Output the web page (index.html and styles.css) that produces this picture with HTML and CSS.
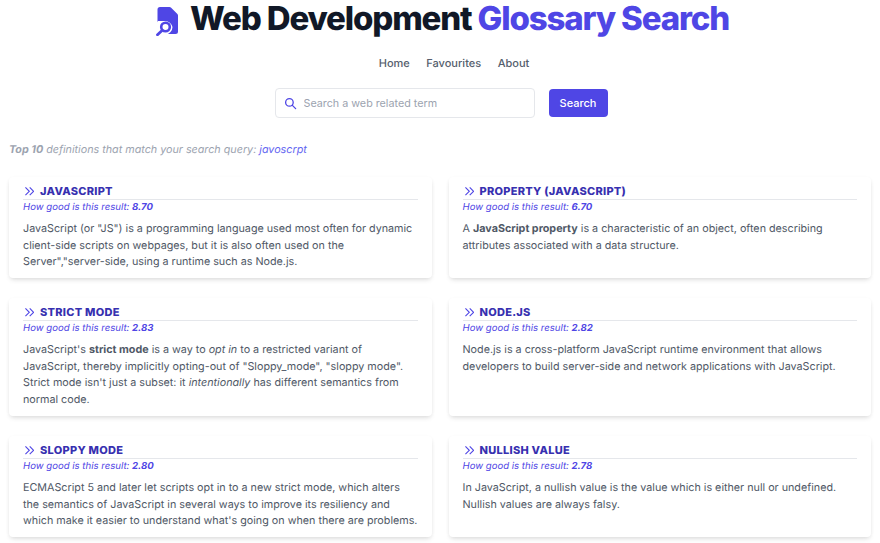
FILE: index.html
```html
<!DOCTYPE html>
<html lang="en">
<head>
<meta charset="utf-8">
<title>Web Development Glossary Search</title>
<link rel="stylesheet" href="styles.css">
</head>
<body>
<header class="masthead">
  <h1 class="title">
    <svg class="logo" viewBox="0 0 24 30" width="24" height="30" aria-hidden="true">
      <path fill="#4f46e5" d="M5 1h9.500a2 2 0 0 1 1.400.6l6.500 6.500a2 2 0 0 1 .6 1.400V25.500a2.500 2.500 0 0 1-2.500 2.500H5a2.500 2.500 0 0 1-2.500-2.500V3.500A2.500 2.500 0 0 1 5 1z"/>
      <path fill="#fff" d="M0 30V19L3 15h7a7.500 7.500 0 0 1 7.500 6A7.500 7.500 0 0 1 10 28.500V30z"/>
      <circle cx="10.500" cy="21" r="4.300" fill="none" stroke="#4f46e5" stroke-width="2.600"/>
      <path d="M7.300 24.200 2.500 28.800" stroke="#4f46e5" stroke-width="2.800" stroke-linecap="round"/>
    </svg>
    <span>Web Development <em class="accent">Glossary Search</em></span>
  </h1>
  <nav class="nav">
    <a>Home</a><a>Favourites</a><a>About</a>
  </nav>
  <form class="search">
    <label class="field">
      <svg class="field-icon" viewBox="0 0 24 24" width="16" height="16" fill="none" stroke="#4f46e5" stroke-width="2.400" stroke-linecap="round" aria-hidden="true"><circle cx="10" cy="10" r="7"/><path d="m15.500 15.500 6 6"/></svg>
      <input class="input" type="text" placeholder="Search a web related term">
    </label>
    <button class="button" type="button">Search</button>
  </form>
</header>
<p class="summary"><b>Top 10</b> definitions that match your search query: <span class="query">javoscrpt</span></p>
<main class="grid">
  <article class="card">
    <h2 class="term"><svg class="chev" viewBox="1 1 10.500 10.500" width="9" height="9" aria-hidden="true"><path d="M1.500 1.500 6 6l-4.500 4.500M6.500 1.500 11 6l-4.500 4.500"/></svg>JAVASCRIPT</h2>
    <p class="score">How good is this result: <b>8.70</b></p>
    <p class="text">JavaScript (or "JS") is a programming language used most often for dynamic client-side scripts on webpages, but it is also often used on the Server","server-side, using a runtime such as Node.js.</p>
  </article>
  <article class="card">
    <h2 class="term"><svg class="chev" viewBox="1 1 10.500 10.500" width="9" height="9" aria-hidden="true"><path d="M1.500 1.500 6 6l-4.500 4.500M6.500 1.500 11 6l-4.500 4.500"/></svg>PROPERTY (JAVASCRIPT)</h2>
    <p class="score">How good is this result: <b>6.70</b></p>
    <p class="text">A <b>JavaScript property</b> is a characteristic of an object, often describing attributes associated with a data structure.</p>
  </article>
  <article class="card">
    <h2 class="term"><svg class="chev" viewBox="1 1 10.500 10.500" width="9" height="9" aria-hidden="true"><path d="M1.500 1.500 6 6l-4.500 4.500M6.500 1.500 11 6l-4.500 4.500"/></svg>STRICT MODE</h2>
    <p class="score">How good is this result: <b>2.83</b></p>
    <p class="text">JavaScript's <b>strict mode</b> is a way to <i>opt in</i> to a restricted variant of JavaScript, thereby implicitly opting-out of "Sloppy_mode", "sloppy mode". Strict mode isn't just a subset: it <i>intentionally</i> has different semantics from normal code.</p>
  </article>
  <article class="card">
    <h2 class="term"><svg class="chev" viewBox="1 1 10.500 10.500" width="9" height="9" aria-hidden="true"><path d="M1.500 1.500 6 6l-4.500 4.500M6.500 1.500 11 6l-4.500 4.500"/></svg>NODE.JS</h2>
    <p class="score">How good is this result: <b>2.82</b></p>
    <p class="text">Node.js is a cross-platform JavaScript runtime environment that allows developers to build server-side and network applications with JavaScript.</p>
  </article>
  <article class="card">
    <h2 class="term"><svg class="chev" viewBox="1 1 10.500 10.500" width="9" height="9" aria-hidden="true"><path d="M1.500 1.500 6 6l-4.500 4.500M6.500 1.500 11 6l-4.500 4.500"/></svg>SLOPPY MODE</h2>
    <p class="score">How good is this result: <b>2.80</b></p>
    <p class="text">ECMAScript 5 and later let scripts opt in to a new strict mode, which alters the semantics of JavaScript in several ways to improve its resiliency and which make it easier to understand what's going on when there are problems.</p>
  </article>
  <article class="card">
    <h2 class="term"><svg class="chev" viewBox="1 1 10.500 10.500" width="9" height="9" aria-hidden="true"><path d="M1.500 1.500 6 6l-4.500 4.500M6.500 1.500 11 6l-4.500 4.500"/></svg>NULLISH VALUE</h2>
    <p class="score">How good is this result: <b>2.78</b></p>
    <p class="text">In JavaScript, a nullish value is the value which is either null or undefined. Nullish values are always falsy.</p>
  </article>
</main>
</body>
</html>
```
FILE: styles.css
```css
* { box-sizing: border-box; }
html, body { margin: 0; height: 543px; overflow: hidden; }
body {
  background: #fff;
  color: #4f5866;
  font-family: Inter, "Liberation Sans", sans-serif;
  text-rendering: geometricPrecision;
  padding: 0 9px;
}
.masthead { display: flex; flex-direction: column; align-items: center; }
.title {
  display: flex;
  align-items: center;
  gap: 11px;
  margin: 0 0 0 4px;
  height: 37px;
  font-size: 33px;
  line-height: 37px;
  font-weight: 800;
  letter-spacing: -1.150px;
  color: #111827;
}
.logo { margin-top: 4px; }
.accent { font-style: normal; color: #4f46e5; }
.nav {
  display: flex;
  gap: 16.500px;
  margin: 18px 0 0 28px;
  font-size: 11px;
  line-height: 16px;
  font-weight: 500;
  color: #555e6d;
}
.search { display: flex; align-items: center; gap: 14px; margin-top: 17px; margin-left: 2px; }
.field {
  display: flex;
  align-items: center;
  gap: 7px;
  width: 260px;
  height: 30px;
  padding: 0 8px;
  border: 1px solid #e5e7eb;
  border-radius: 4px;
}
.field-icon { flex: none; width: 13px; height: 13px; }
.input {
  flex: 1;
  min-width: 0;
  border: 0;
  padding: 0;
  outline: 0;
  font: inherit;
  font-size: 10.750px;
}
.input::placeholder { color: #9ca3af; opacity: 1; }
.button {
  width: 59px;
  height: 28px;
  border: 0;
  border-radius: 4px;
  background: #4f46e5;
  color: #fff;
  font: inherit;
  font-size: 11px;
  font-weight: 500;
}
.summary {
  margin: 24px 0 0;
  font-size: 10.750px;
  line-height: 16px;
  font-style: italic;
  color: #9ca3af;
}
.query { color: #6366f1; }
.grid {
  display: grid;
  grid-template-columns: 1fr 1fr;
  gap: 20px 17px;
  margin-top: 19px;
}
.card {
  padding: 6px 14px 7.750px;
  border-radius: 4px;
  background: #fff;
  box-shadow: 0 3px 5px -1px rgba(0,0,0,.1), 0 1px 4px -1px rgba(0,0,0,.08);
}
.term {
  display: flex;
  align-items: center;
  gap: 6px;
  margin: 0;
  padding-left: 2px;
  border-bottom: 1px solid #e5e7eb;
  font-size: 11px;
  line-height: 16px;
  font-weight: 800;
  letter-spacing: .275px;
  color: #3730b0;
}
.chev { flex: none; fill: none; stroke: #4f46e5; stroke-width: 1.300; }
.score {
  margin: 1px 0 0;
  font-size: 9.600px;
  line-height: 14px;
  font-style: italic;
  color: #4f46e5;
}
.text {
  margin: 6px 0 0;
  font-size: 10.750px;
  line-height: 16.500px;
}
```
